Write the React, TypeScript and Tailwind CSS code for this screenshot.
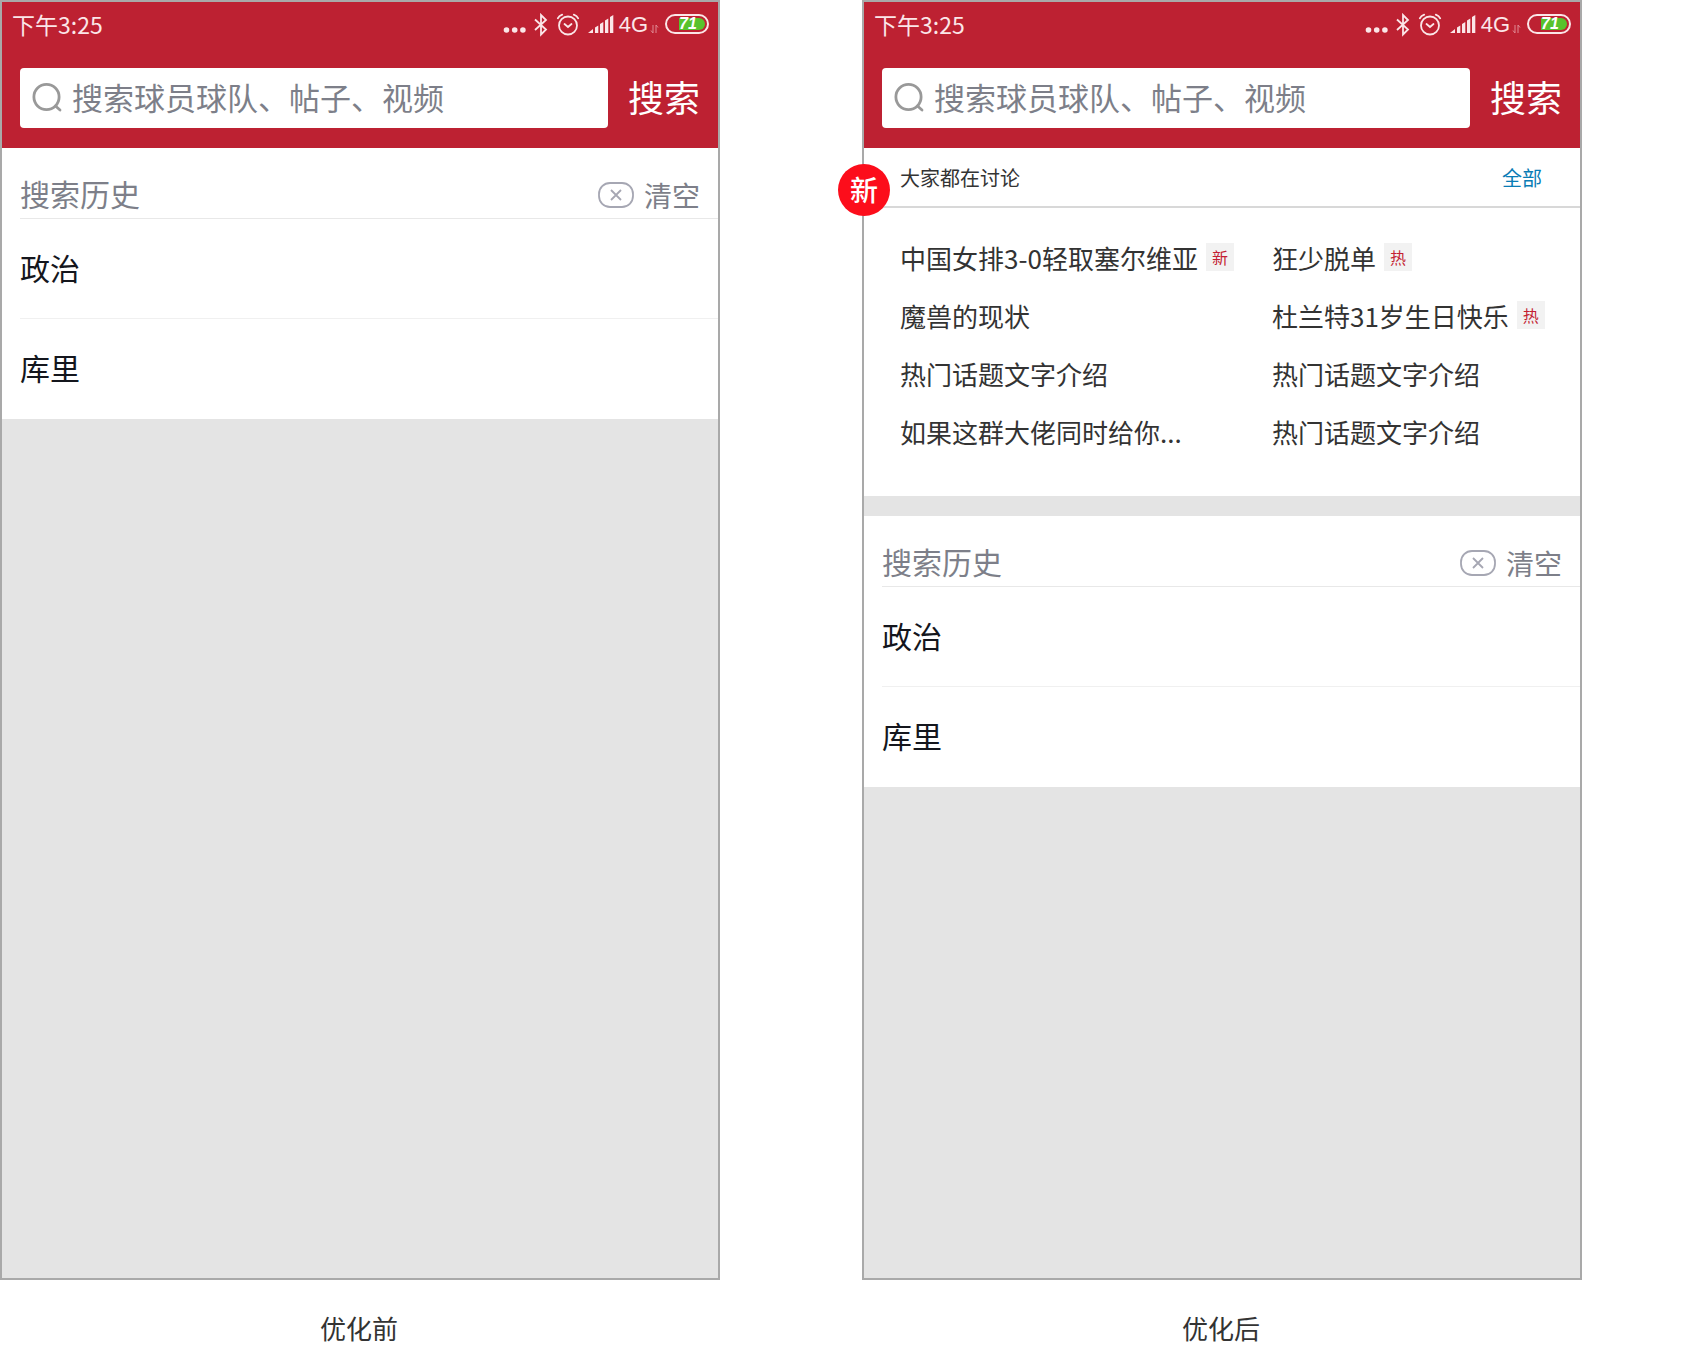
import { useId } from 'react';

type Topic = { text: string; tag?: string };

const topics: Topic[] = [
  { text: '中国女排3-0轻取塞尔维亚', tag: '新' },
  { text: '狂少脱单', tag: '热' },
  { text: '魔兽的现状' },
  { text: '杜兰特31岁生日快乐', tag: '热' },
  { text: '热门话题文字介绍' },
  { text: '热门话题文字介绍' },
  { text: '如果这群大佬同时给你...' },
  { text: '热门话题文字介绍' },
];

const history = ['政治', '库里'];

function StatusBar() {
  return (
    <div className="flex h-[46px] items-center justify-between pr-[9px] pl-[10px] text-[#fbe6e8]">
      <span className="pb-0.5 text-[23px] leading-8">下午3:25</span>
      <div className="flex items-center">
        <svg width="24" height="24" viewBox="0 0 24 24" fill="currentColor" aria-hidden="true">
          <circle cx="4.5" cy="17" r="2.8" />
          <circle cx="12.7" cy="17" r="2.8" />
          <circle cx="20.9" cy="17" r="2.8" />
        </svg>
        <svg
          className="ml-2"
          width="14"
          height="24"
          viewBox="0 0 14 24"
          fill="none"
          stroke="currentColor"
          strokeWidth="1.8"
          aria-hidden="true"
        >
          <path d="M1 6.5 12 16.5 7 21.5V2L12 7 1 17" />
        </svg>
        <svg
          className="ml-2"
          width="24"
          height="24"
          viewBox="0 0 24 24"
          fill="none"
          stroke="currentColor"
          strokeWidth="1.8"
          strokeLinecap="round"
          aria-hidden="true"
        >
          <circle cx="12" cy="12.5" r="9" />
          <path d="M1.8 5.3Q3 2.8 6.2 1.7M22.2 5.3Q21 2.8 17.8 1.7" />
          <path d="M8.5 11 12 14 15.5 11" />
        </svg>
        <svg
          className="ml-[7px]"
          width="28"
          height="24"
          viewBox="0 0 28 24"
          fill="currentColor"
          aria-hidden="true"
        >
          <path d="M1 20 6 16V20Z" />
          <path d="M8 14.5 11.3 12.5V20H8ZM13 11 16.3 9V20H13ZM18 7.5 21.3 5.5V20H18ZM23 4 26.3 2V20H23Z" />
        </svg>
        <span className="ml-1 font-['Liberation_Sans',sans-serif] text-[22px] leading-8">4G</span>
        <svg
          className="ml-0.5"
          width="9"
          height="24"
          viewBox="0 0 9 24"
          fill="none"
          stroke="#e08a93"
          strokeWidth="1"
          aria-hidden="true"
        >
          <path d="M3 12V20L1 17.5M6 20V12L8 14.5" />
        </svg>
        <span className="mb-0.5 ml-1.5 flex h-5 w-11 items-center justify-end rounded-full border-2 border-current pr-0.5">
          <span className="flex h-3 w-[26px] items-center rounded-r-full bg-[#58c22c] font-['Liberation_Sans_Narrow','Liberation_Sans',sans-serif] text-base leading-none font-bold text-white italic">
            71
          </span>
        </span>
      </div>
    </div>
  );
}

function SearchHeader() {
  const id = useId();
  return (
    <header className="bg-[#bd2132]">
      <StatusBar />
      <form className="flex items-center gap-5 px-[18px] py-5" onSubmit={(e) => e.preventDefault()}>
        <div className="flex h-[60px] min-w-0 flex-1 items-center gap-2.5 rounded-[4px] bg-white pl-3">
          <label htmlFor={id} aria-label="搜索" className="shrink-0">
            <svg
              width="30"
              height="30"
              viewBox="0 0 30 30"
              fill="none"
              stroke="#999999"
              strokeWidth="2.8"
              strokeLinecap="round"
            >
              <circle cx="14.5" cy="14" r="12.6" />
              <path d="M23.5 23 28 27" />
            </svg>
          </label>
          <input
            id={id}
            type="text"
            placeholder="搜索球员球队、帖子、视频"
            className="h-full min-w-0 flex-1 bg-transparent pb-1 text-[31px] text-[#7d7f89] outline-none placeholder:text-[#7d7f89]"
          />
        </div>
        <button type="submit" className="pb-1 text-[36px] leading-[56px] text-white">
          搜索
        </button>
      </form>
    </header>
  );
}

function Discussion() {
  return (
    <section className="relative border-b-[20px] border-[#e4e4e4] bg-white text-[#333333]">
      <div className="flex h-[60px] items-center justify-between border-b-2 border-[#d8d8d8] pt-0.5 pr-[38px] pl-9 text-xl">
        <h2>大家都在讨论</h2>
        <a href="#all" className="text-[#0a7cb5]">
          全部
        </a>
      </div>
      <span className="absolute top-4 -left-[26px] flex size-[52px] items-center justify-center rounded-full bg-[#fc0d1b] pb-0.5 text-[28px] leading-none font-medium text-white">
        新
      </span>
      <ul className="grid grid-cols-[372fr_274fr] pt-5 pr-[34px] pb-9 pl-9">
        {topics.map((topic, i) => (
          <li key={i} className="flex h-[58px] items-center gap-2 text-[26px] whitespace-nowrap">
            <a href="#topic">{topic.text}</a>
            {topic.tag && (
              <span className="flex size-7 items-center justify-center bg-[#f2f2f2] text-base leading-none text-[#c41f33]">
                {topic.tag}
              </span>
            )}
          </li>
        ))}
      </ul>
    </section>
  );
}

function History() {
  return (
    <section className="bg-white pl-[18px]">
      <div className="flex h-[71px] items-end justify-between border-b border-[#e8e8e8] pr-[18px] text-[#7d7f89]">
        <h2 className="text-[30px] leading-[50px]">搜索历史</h2>
        <button type="button" className="flex items-center gap-2.5 text-[28px] leading-[46px]">
          <svg
            width="36"
            height="26"
            viewBox="0 0 36 26"
            fill="none"
            stroke="#a6a7b3"
            strokeWidth="1.8"
            aria-hidden="true"
          >
            <rect x="1" y="1" width="34" height="24" rx="11" />
            <path d="M13 8 23 18M23 8 13 18" />
          </svg>
          清空
        </button>
      </div>
      <ul className="divide-y divide-[#f0f0f0] text-[30px] text-[#14161d]">
        {history.map((item) => (
          <li key={item} className="h-[100px]">
            <a href="#history" className="block leading-[96px]">
              {item}
            </a>
          </li>
        ))}
      </ul>
    </section>
  );
}

function Phone({ caption, improved = false }: { caption: string; improved?: boolean }) {
  return (
    <figure className="flex min-w-0 flex-1 flex-col">
      <div className="flex-1 border-2 border-[#a9a9a9] bg-[#e4e4e4]">
        <SearchHeader />
        {improved && <Discussion />}
        <History />
      </div>
      <figcaption className="pt-[30px] pr-0.5 pb-0.5 text-center text-[26px] leading-9 text-[#333333]">
        {caption}
      </figcaption>
    </figure>
  );
}

export default function App() {
  return (
    <main
      lang="zh-CN"
      className="flex min-h-screen gap-[142px] bg-white pr-[122px] font-['Noto_Sans_CJK_SC',sans-serif]"
    >
      <Phone caption="优化前" />
      <Phone caption="优化后" improved />
    </main>
  );
}
